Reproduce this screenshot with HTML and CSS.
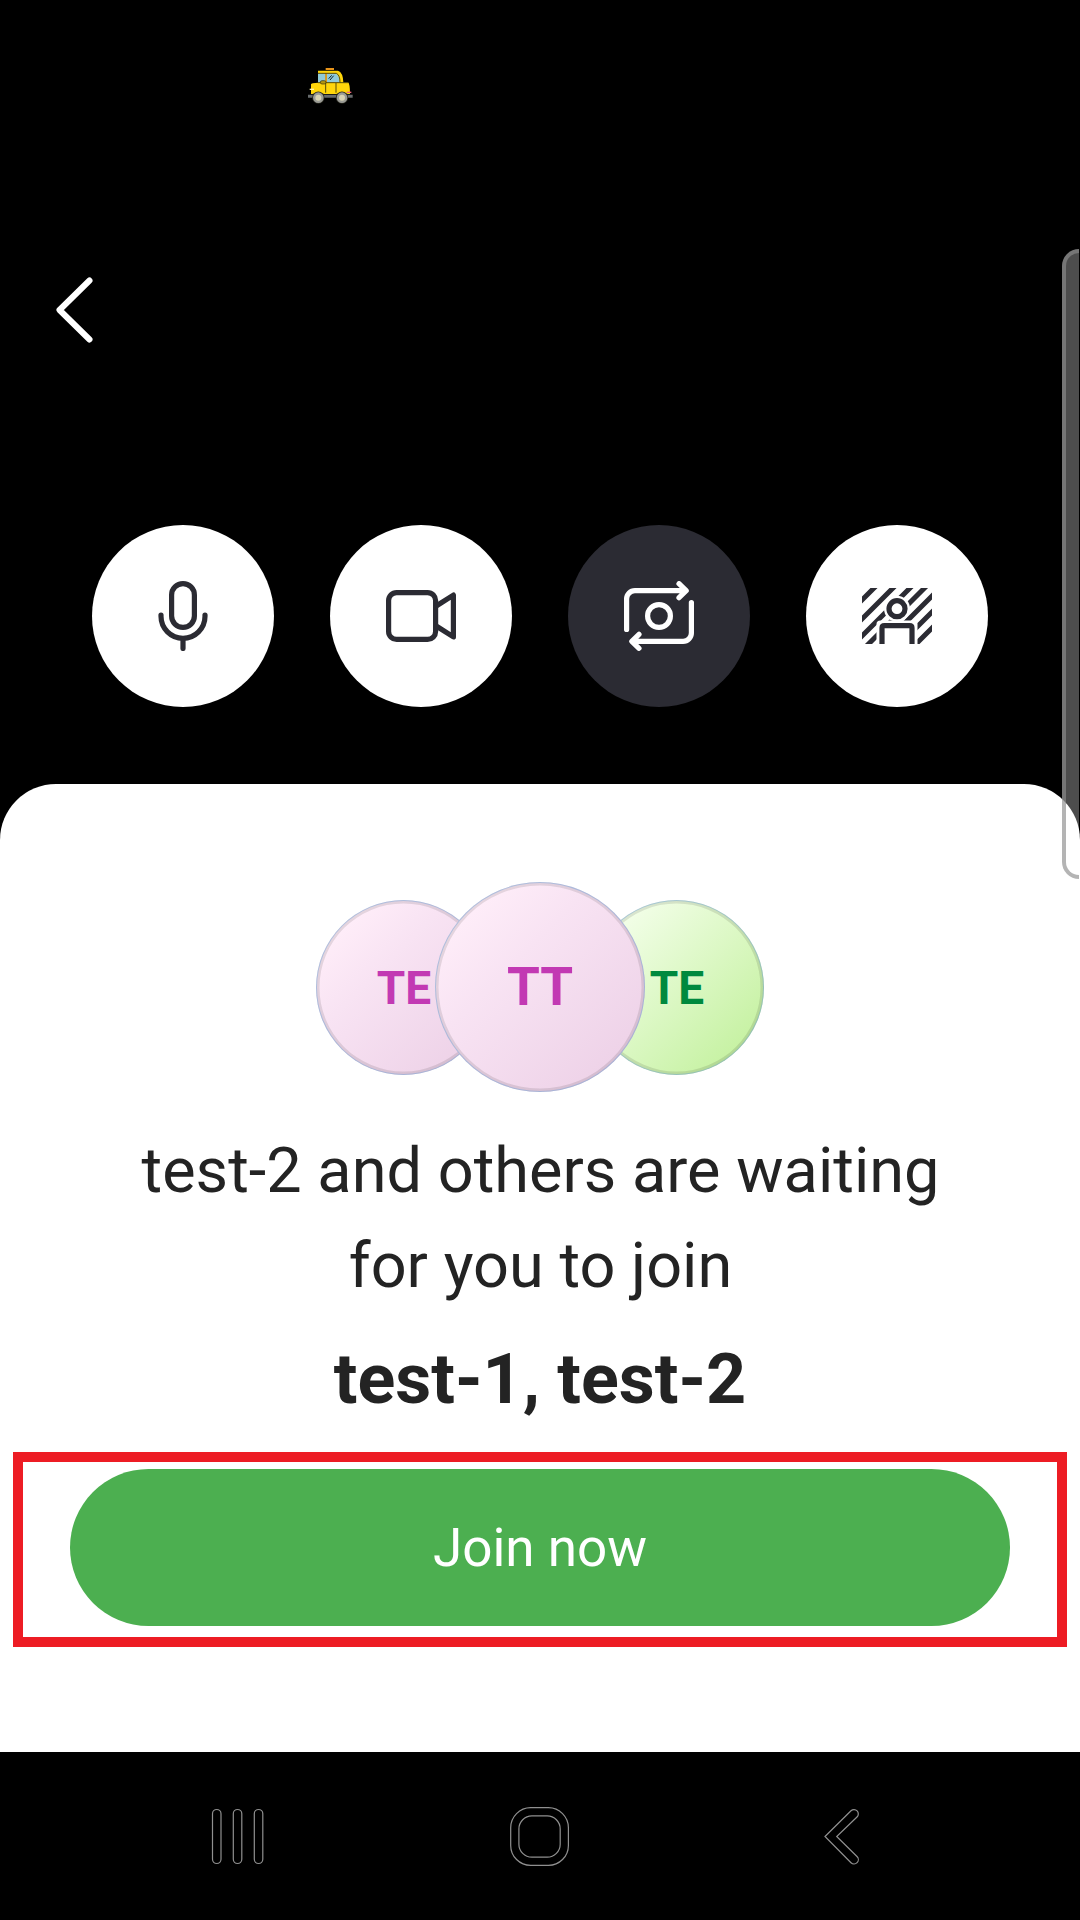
FILE: index.html
```html
<!DOCTYPE html>
<html lang="en">
<head>
<meta charset="utf-8">
<title>Join call</title>
<link rel="stylesheet" href="styles.css">
</head>
<body>
<main class="screen">
  <header class="status">
    <svg class="taxi" viewBox="0 0 240 210" aria-label="Taxi">
      <path d="M107 60V54h25v6z" fill="#e8941a"/>
      <path d="M84 62h60q15 5 16 35h14q6 4 6 35H63v-29q0-5 21-5z" fill="#ffd60a"/>
      <path d="M84 71h22v26H84z" fill="#8fcad8"/>
      <path d="M111 71h27q10 5 11 26h-38z" fill="#8fcad8"/>
      <path d="M108 70v27" stroke="#c77c22" stroke-width="4"/>
      <path d="M116 86l9-10M120 90l11-13" stroke="#15262b" stroke-width="3"/>
      <path d="M84 98h90M107 99v29M138 99v29M84 70h55q11 5 11 27" stroke="#33300b" stroke-width="2.500" fill="none"/>
      <rect x="91" y="92" width="17" height="10" rx="5" fill="#b69711" stroke="#33300b" stroke-width="2"/>
      <path d="M54 134h134v9H54z" fill="#676b6d"/>
      <path d="M59 118h13" stroke="#fff5ae" stroke-width="4"/>
      <path d="M170 127h14" stroke="#ef657a" stroke-width="4"/>
      <circle cx="85" cy="143" r="18.500" fill="#2a2a20"/>
      <circle cx="156" cy="143" r="18.500" fill="#2a2a20"/>
      <circle cx="85" cy="143" r="12.500" fill="#d8d4b4" stroke="#9b9c96" stroke-width="7"/>
      <circle cx="156" cy="143" r="12.500" fill="#d8d4b4" stroke="#9b9c96" stroke-width="7"/>
    </svg>
  </header>
  <nav class="topbar">
    <svg class="back" viewBox="0 0 40 70" aria-label="Back"><path d="M34.500 5.500 4.500 35l30 29.500"/></svg>
  </nav>
  <section class="controls">
    <button class="control" aria-label="Microphone">
      <svg class="icon" viewBox="0 0 70 70"><rect x="23.600" y="2.600" width="22.800" height="43.800" rx="11.400"/><path d="M13 34v1.300a22 22 0 0 0 44 0V34M35 57.500v10"/></svg>
    </button>
    <button class="control" aria-label="Camera">
      <svg class="icon" viewBox="0 0 70 70"><rect x="2.600" y="11.600" width="47" height="46.800" rx="8"/><path d="m51 24.500 16.400-10.400v41.800L51 45.500"/></svg>
    </button>
    <button class="control control-dark" aria-label="Switch camera">
      <svg class="icon" viewBox="0 0 70 70"><path d="M2.600 48.500V18a8.300 8.300 0 0 1 8.300-8.300H61M55 2.700l7.200 7-7.200 7M67.400 21.600V52a8.300 8.300 0 0 1-8.300 8.300H9M15 53.300l-7.200 7 7.200 7"/><circle cx="35" cy="35" r="11.400"/></svg>
    </button>
    <button class="control" aria-label="Background effects">
      <svg class="icon" viewBox="0 0 70 70">
        <defs><clipPath id="frame"><path d="M0 7h70v56H0z"/></clipPath></defs>
        <g clip-path="url(#frame)">
          <path class="hatch" d="M-5 24 19 0M-5 43 38 0M-5 60 55 0M-5 74.500 69.500 0M10 75 85 0M26 75 85 16M42 75 85 32"/>
          <circle class="cutout" cx="35" cy="27.700" r="13"/>
          <path class="cutout" d="M14.500 70V43q0-3.500 4-3.500h33q4 0 4 3.500v27z"/>
          <circle cx="35" cy="27.700" r="8"/>
          <path d="M20 70V47q0-2.400 2.400-2.400h25.200q2.400 0 2.400 2.400v23"/>
        </g>
      </svg>
    </button>
  </section>
  <section class="sheet">
    <div class="avatars">
      <div class="avatar pink">TE</div>
      <div class="avatar large pink">TT</div>
      <div class="avatar green">TE</div>
    </div>
    <p class="waiting">test-2 and others are waiting<br>for you to join</p>
    <h1 class="names">test-1, test-2</h1>
    <div class="highlight"><button class="join">Join now</button></div>
  </section>
  <footer class="navbar">
    <svg class="nav-icon" viewBox="0 0 60 60"><rect x="4.500" y="2.500" width="8.500" height="54" rx="4.250"/><rect x="25.300" y="2.500" width="8.500" height="54" rx="4.250"/><rect x="46.300" y="2.500" width="8.500" height="54" rx="4.250"/></svg>
    <svg class="nav-icon" viewBox="0 0 60 60"><rect x=".700" y=".700" width="57.700" height="57.700" rx="20"/><rect x="8.900" y="8.900" width="41.300" height="41.300" rx="13"/></svg>
    <svg class="nav-icon" viewBox="0 0 60 60"><path d="M13 29.500 39 3.800a4.300 4.300 0 0 1 6 6.200L24.700 29.500l20.300 20a4.300 4.300 0 0 1-6 6.200z"/></svg>
  </footer>
  <div class="edge-handle"></div>
</main>
</body>
</html>
```
FILE: styles.css
```css
* { box-sizing: border-box; }
body { margin: 0; background: #000; font-family: Roboto, sans-serif; }
button { border: 0; padding: 0; font: inherit; }
svg { display: block; fill: none; }
.screen { position: relative; width: 1080px; height: 1920px; display: flex; flex-direction: column; overflow: hidden; }
.status { height: 245px; padding: 50px 0 0 290px; }
.taxi { width: 80px; height: 70px; }
.topbar { height: 280px; padding: 30px 0 0 55px; }
.back { width: 40px; height: 70px; stroke: #fff; stroke-width: 6; stroke-linecap: round; stroke-linejoin: round; }
.controls { height: 259px; display: flex; justify-content: center; align-items: flex-start; gap: 56px; }
.control { width: 182px; height: 182px; border-radius: 50%; background: #fff; color: #2b2b33; display: grid; place-items: center; }
.control-dark { background: #2b2b33; color: #fff; }
.icon { width: 70px; height: 70px; stroke: currentColor; stroke-width: 5.200; stroke-linecap: round; stroke-linejoin: round; }
.hatch { stroke-width: 5; stroke-linecap: butt; }
.cutout { fill: #fff; stroke: none; }
.sheet { height: 968px; background: #fff; border-radius: 56px 56px 0 0; padding-top: 98px; display: flex; flex-direction: column; align-items: center; color: #232323; }
.avatars { display: flex; align-items: center; height: 210px; }
.avatar { width: 175px; height: 175px; border-radius: 50%; display: grid; place-items: center; padding: 2px 0 0 1px; font-weight: 700; font-size: 46px; box-shadow: inset 0 0 0 1px rgba(110, 165, 220, .45), inset 0 0 0 3.500px rgba(0, 0, 0, .1); }
.pink { color: #c239b3; background: linear-gradient(135deg, #ffeef9 12%, #f8e3f3 38%, #edd1e7 90%); }
.green { color: #00893e; background: linear-gradient(135deg, #f5ffec 10%, #c4f19f 90%); }
.large { width: 210px; height: 210px; margin: 0 -56px; padding: 0; z-index: 1; font-size: 53px; }
.waiting { margin: 31px 0 0; font-size: 63px; line-height: 95px; letter-spacing: .03px; text-align: center; white-space: nowrap; padding-left: 1px; }
.names { margin: 19px 0 0; font-size: 70px; line-height: 94px; font-weight: 700; white-space: nowrap; }
.highlight { width: 1054px; height: 195px; margin-top: 26px; padding: 7px 47px 0; border: 10px solid #ed1c24; }
.join { display: block; width: 940px; height: 157px; border-radius: 79px; background: #4caf50; color: #fff; font-size: 53px; }
.navbar { height: 168px; padding: 55px 0 0 208px; display: flex; gap: 242px; }
.nav-icon { width: 60px; height: 60px; stroke: #909090; stroke-width: 1.200; }
.edge-handle { position: absolute; left: 1062px; top: 249px; width: 17px; height: 630px; border: 4px solid rgba(140, 140, 140, .65); border-right: 0; border-radius: 17px 0 0 17px; background: rgba(255, 255, 255, .3); }
```
